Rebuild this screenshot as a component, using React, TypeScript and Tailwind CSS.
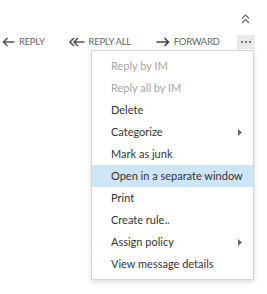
import React from "react";

const items: { label: string; disabled?: boolean; sub?: boolean; active?: boolean }[] = [
  { label: "Reply by IM", disabled: true },
  { label: "Reply all by IM", disabled: true },
  { label: "Delete" },
  { label: "Categorize", sub: true },
  { label: "Mark as junk" },
  { label: "Open in a separate window", active: true },
  { label: "Print" },
  { label: "Create rule.." },
  { label: "Assign policy", sub: true },
  { label: "View message details" },
];

function LeftArrow() {
  return (
    <svg width="13" height="10" viewBox="0 0 13 10" fill="none" stroke="#555" strokeWidth="1.6">
      <path d="M12.5 5H1.5M5.5 1L1.5 5L5.5 9" />
    </svg>
  );
}

function DoubleLeft() {
  return (
    <svg width="16" height="10" viewBox="0 0 16 10" fill="none" stroke="#555" strokeWidth="1.6">
      <path d="M15.5 5H5M5 1L1 5L5 9M9 1L5 5L9 9" />
    </svg>
  );
}

function RightArrow() {
  return (
    <svg width="14" height="10" viewBox="0 0 14 10" fill="none" stroke="#444" strokeWidth="1.6">
      <path d="M0.5 5H12.5M8.5 1L12.5 5L8.5 9" />
    </svg>
  );
}

export default function App() {
  return (
    <div
      className="relative w-[267px] h-[294px] bg-white overflow-hidden"
      style={{ fontFamily: 'Lato, "Open Sans", sans-serif' }}
    >
      <div className="flex justify-end pr-[17px] pt-[14px] h-[30px]">
        <svg width="9" height="10" viewBox="0 0 9 10" fill="none" stroke="#666" strokeWidth="1.1">
          <path d="M1 4.5L4.5 1L8 4.5M1 9L4.5 5.5L8 9" />
        </svg>
      </div>
      <div className="flex items-center h-[24px] pl-[2px] text-[9.5px] tracking-[-0.3px] text-[#666] whitespace-nowrap">
        <div className="flex items-center gap-[4px]">
          <LeftArrow />
          <span>REPLY</span>
        </div>
        <div className="flex items-center gap-[4px] ml-[24px]">
          <DoubleLeft />
          <span>REPLY ALL</span>
        </div>
        <div className="flex items-center gap-[4px] ml-[25px]">
          <RightArrow />
          <span>FORWARD</span>
        </div>
        <div className="ml-[17px] w-[18px] h-[14px] bg-[#e9e9e9] flex items-center justify-center gap-[2px]">
          <span className="w-[2px] h-[2px] bg-[#555] rounded-full" />
          <span className="w-[2px] h-[2px] bg-[#555] rounded-full" />
          <span className="w-[2px] h-[2px] bg-[#555] rounded-full" />
        </div>
      </div>
      <div className="absolute left-[91px] top-[50px] w-[163px] bg-white border border-[#d4d4d4] shadow-[0_2px_5px_rgba(0,0,0,0.15)] py-[4px]">
        {items.map((it) => (
          <div
            key={it.label}
            className={
              "flex items-center justify-between h-[22px] pl-[19px] pr-[11px] text-[11px] whitespace-nowrap " +
              (it.disabled ? "text-[#a6a6a6] " : "text-[#333] ") +
              (it.active ? "bg-[#cde6f7]" : "")
            }
          >
            <span>{it.label}</span>
            {it.sub && (
              <svg width="4" height="7" viewBox="0 0 4 7">
                <path d="M0 0L4 3.5L0 7Z" fill="#666" />
              </svg>
            )}
          </div>
        ))}
      </div>
    </div>
  );
}
